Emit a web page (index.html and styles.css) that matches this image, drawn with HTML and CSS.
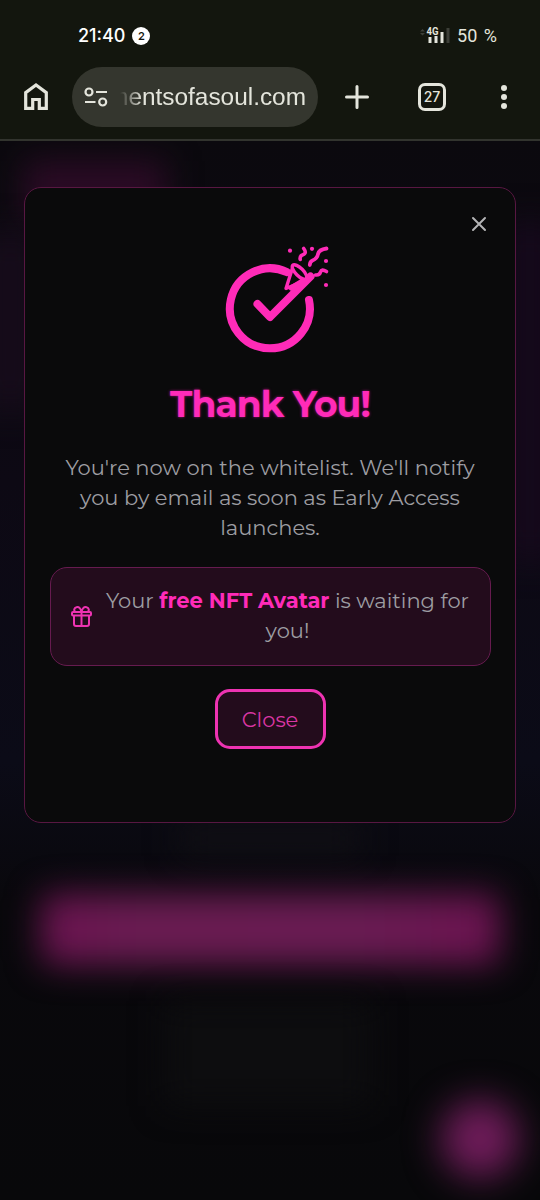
FILE: index.html
```html
<!DOCTYPE html>
<html lang="en">
<head>
    <meta charset="UTF-8">
    <meta name="viewport" content="width=device-width, initial-scale=1.0">
    <title>Thank You!</title>
    <link rel="stylesheet" href="styles.css">
</head>
<body>
    <header class="browser">
        <div class="status-bar">
            <span class="time">21:40</span>
            <span class="count">2</span>
            <svg class="signal" width="30" height="18" viewBox="0 0 30 18">
                <path d="M0 4.500L2.500 2L5 4.500zM0 6L2.500 8.500L5 6z" fill="#3d3f38"/>
                <text x="6.500" y="7.500" font-size="10" font-weight="700" textLength="12" lengthAdjust="spacingAndGlyphs" fill="#e4e5dc">4G</text>
                <path d="M8.500 10h3v6h-3zM14.500 9h3v7h-3zM20.500 5h3v11h-3z" fill="#e4e5dc"/>
                <path d="M26.500 1h3v15h-3z" fill="#3d3f38"/>
            </svg>
            <span class="battery">50 %</span>
        </div>
        <div class="toolbar">
            <svg class="home" width="24" height="28" viewBox="0 0 24 28" fill="none" stroke="#e4e5dc" stroke-width="3.200">
                <path d="M1.700 25.400V9.600L12 2l10.300 7.600v15.800h-7V16.500H8.700v8.900z"/>
            </svg>
            <div class="address">
                <svg width="24" height="20" viewBox="0 0 24 20" fill="none" stroke="#e4e5dc" stroke-width="2.200">
                    <circle cx="5" cy="5" r="3.500"/>
                    <path d="M12 5h11M1 15h10.500"/>
                    <circle cx="18.700" cy="15" r="3.500"/>
                </svg>
                <div class="url"><span>mentsofasoul.com</span></div>
            </div>
            <svg class="plus" width="24" height="24" viewBox="0 0 24 24" stroke="#e4e5dc" stroke-width="3" stroke-linecap="round">
                <path d="M12 1.500v21M1.500 12h21"/>
            </svg>
            <div class="tabs">27</div>
            <svg class="dots" width="6" height="26" viewBox="0 0 6 26" fill="#e4e5dc">
                <circle cx="3" cy="4" r="3"/>
                <circle cx="3" cy="13" r="3"/>
                <circle cx="3" cy="22" r="3"/>
            </svg>
        </div>
    </header>

    <main class="page">
        <!-- blurred page behind the modal -->
        <div class="glow glow-tag"></div>
        <div class="glow glow-left"></div>
        <div class="glow glow-right"></div>
        <div class="glow glow-text"></div>
        <div class="glow glow-button"></div>
        <div class="glow glow-footer"></div>
        <div class="glow glow-chat"></div>

        <div class="modal">
            <button class="modal-x" aria-label="Close">
                <svg width="16" height="16" viewBox="0 0 16 16" stroke="#b4b4b6" stroke-width="2" stroke-linecap="round">
                    <path d="M2 2l12 12M14 2L2 14"/>
                </svg>
            </button>

            <svg class="success" width="104" height="108" viewBox="25 15 104 108" fill="none" stroke="#ff2bb8" stroke-linecap="round" stroke-linejoin="round">
                <path d="M109 70A40 40 0 1 1 87 42.200" stroke-width="8"/>
                <path d="M57.500 74L70 87L110.500 46.500" stroke-width="8"/>
                <path d="M92.500 38L86 58.500L104 51z" fill="#0a0a0b" stroke-width="3.400"/>
                <path d="M91 58L110 46.500" stroke-width="5"/>
                <ellipse cx="99.500" cy="42" rx="9.500" ry="3.800" transform="rotate(45 99.500 42)" fill="#0a0a0b" stroke-width="3.400"/>
                <path d="M103.700 18.500C107 23 104.500 24 102 25.200Q99.600 26.500 100.200 29.500" stroke-width="3.600"/>
                <path d="M126.500 18.500Q119 19.500 118 24C117.300 28.500 115 29.500 112.500 30.500Q110 31.500 109.800 35" stroke-width="3.800"/>
                <path d="M126.500 41.500Q121.500 38.500 120.500 42T115.500 45" stroke-width="3.600"/>
                <g fill="#ff2bb8" stroke="none">
                    <circle cx="90" cy="20.700" r="2.100"/>
                    <circle cx="112" cy="18.800" r="2.100"/>
                    <circle cx="126" cy="31" r="2.100"/>
                    <circle cx="126" cy="55" r="2.100"/>
                </g>
            </svg>

            <h1>Thank You!</h1>
            <p class="message">You're now on the whitelist. We'll notify<br>you by email as soon as Early Access<br>launches.</p>

            <div class="gift">
                <svg width="21" height="21" viewBox="0.500 0.500 21 21" fill="none" stroke="#ee33b2" stroke-width="2" stroke-linejoin="round">
                    <rect x="1.500" y="6.500" width="19" height="3.500" rx="1"/>
                    <path d="M3.500 10V18.500q0 2 2 2h11q2 0 2-2V10M11 6.500v14M11 6.500C10 2.500 8 1.300 6 1.700C3.500 2.200 3 5 4.800 6.500M11 6.500C12 2.500 14 1.300 16 1.700C18.500 2.200 19 5 17.200 6.500"/>
                </svg>
                <p>Your <strong>free NFT Avatar</strong> is waiting for<br>you!</p>
            </div>

            <button class="close-btn">Close</button>
        </div>
    </main>
</body>
</html>
```
FILE: styles.css
```css
* {
    box-sizing: border-box;
}

body {
    margin: 0;
    width: 540px;
    height: 1200px;
    overflow: hidden;
    background: #08080a;
    font-family: Montserrat, Inter, sans-serif;
}

button {
    font-family: inherit;
    cursor: pointer;
}

.browser {
    height: 141px;
    background: #13160e;
    border-bottom: 2px solid #32342e;
    color: #e4e5dc;
    font-family: Roboto, sans-serif;
}

.status-bar {
    display: flex;
    align-items: center;
    height: 67px;
    padding: 4px 43px 0 78px;
}

.time {
    font-family: Inter, sans-serif;
    font-size: 18px;
    font-weight: 500;
    color: #fff;
}

.count {
    width: 18px;
    height: 18px;
    margin-left: 7px;
    border-radius: 50%;
    background: #fff;
    color: #13160e;
    font: 600 11px/18px Inter, sans-serif;
    text-align: center;
}

.signal {
    margin-left: auto;
    margin-right: 7px;
}

.battery {
    font-size: 18px;
    font-weight: 400;
    word-spacing: 2px;
}

.toolbar {
    display: flex;
    align-items: center;
    height: 60px;
    padding: 0 33px 0 24px;
}

.address {
    display: flex;
    align-items: center;
    gap: 12px;
    width: 246px;
    height: 60px;
    margin-left: 24px;
    padding: 0 12px;
    border-radius: 30px;
    background: #34362e;
}

.url {
    display: flex;
    justify-content: flex-end;
    width: 186px;
    overflow: hidden;
    font-family: "Liberation Sans", sans-serif;
    font-size: 24.4px;
    -webkit-mask-image: linear-gradient(90deg, transparent, #000 22px);
    mask-image: linear-gradient(90deg, transparent, #000 22px);
}

.plus {
    margin-left: 27px;
}

.tabs {
    width: 28px;
    height: 28px;
    margin-left: 49px;
    border: 3px solid #e4e5dc;
    border-radius: 7px;
    font: 500 14px/22px Inter, sans-serif;
    text-align: center;
}

.dots {
    margin-left: auto;
}

.page {
    position: relative;
    height: 1059px;
    padding: 46px 24px 0;
    overflow: hidden;
    background: linear-gradient(#0b090e, #0d0914 340px, #0b0b17 620px, #09080c 760px, #08080a);
}

.glow {
    position: absolute;
    filter: blur(16px);
}

.glow-tag {
    left: 24px;
    top: 20px;
    width: 142px;
    height: 60px;
    background: #2b0b25;
}

.glow-left {
    left: -20px;
    top: 90px;
    width: 60px;
    height: 180px;
    background: #160c1a;
}

.glow-right {
    right: -20px;
    top: 80px;
    width: 60px;
    height: 340px;
    background: #15091b;
}

.glow-text {
    left: 180px;
    top: 680px;
    width: 180px;
    height: 35px;
    background: #100f14;
}

.glow-button {
    left: 41px;
    top: 753px;
    width: 459px;
    height: 71px;
    border-radius: 10px;
    background: linear-gradient(90deg, #6b1350, #6a1c52 20%, #6a1c53 70%, #6b1350);
    filter: blur(17px);
}

.glow-footer {
    left: 165px;
    top: 860px;
    width: 205px;
    height: 105px;
    background: #0d0d0f;
}

.glow-chat {
    right: 21px;
    top: 959px;
    width: 78px;
    height: 78px;
    border-radius: 50%;
    background: #6f1c5a;
    filter: blur(18px);
}

.modal {
    position: relative;
    display: flex;
    flex-direction: column;
    align-items: center;
    height: 636px;
    padding: 57px 24px 0;
    border: 1px solid #581742;
    border-radius: 17px;
    background: #0a0a0b;
    color: #9d9da2;
    text-align: center;
}

.modal-x {
    position: absolute;
    top: 28px;
    right: 28px;
    width: 16px;
    height: 16px;
    padding: 0;
    border: 0;
    background: none;
    line-height: 0;
}

.success {
    margin-left: 14px;
}

.modal h1 {
    margin: 28px 0 0;
    color: #ff2bb8;
    font-size: 36px;
    font-weight: 700;
    line-height: 46px;
    letter-spacing: -0.9px;
    text-shadow: 0 0 3px #a5137a;
}

.message,
.gift p {
    margin: 0;
    font-size: 21px;
    font-weight: 400;
    line-height: 30px;
    white-space: nowrap;
}

.message {
    margin-top: 26px;
}

.gift {
    display: flex;
    align-items: center;
    gap: 14px;
    width: 441px;
    height: 99px;
    margin-top: 24px;
    padding: 0 20px 1px;
    border: 1px solid #661b4f;
    border-radius: 17px;
    background: #230c1c;
}

.gift p {
    flex: 1;
}

.gift strong {
    color: #ff2bb8;
    font-weight: 700;
}

.close-btn {
    width: 111px;
    height: 60px;
    margin-top: 23px;
    padding: 0;
    border: 3px solid #ee33b2;
    border-radius: 15px;
    background: #230c1c;
    color: #d936a3;
    font-size: 21px;
    font-weight: 400;
}
```
